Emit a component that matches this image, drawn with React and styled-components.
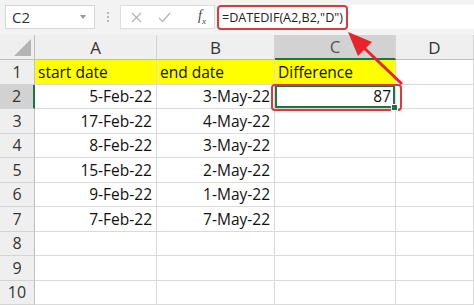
import React from "react";
import styled, { createGlobalStyle } from "styled-components";

const GlobalStyle = createGlobalStyle`
  html, body {
    margin: 0;
    padding: 0;
    background: #fff;
  }
  body {
    font-family: "Open Sans", "Liberation Sans", sans-serif;
  }
`;

const Sheet = styled.div`
  position: relative;
  width: 474px;
  height: 305px;
  overflow: hidden;
  background: #fff;
`;

const FormulaBar = styled.div`
  height: 35px;
  box-sizing: border-box;
  background: #f3f3f3;
  display: flex;
  align-items: flex-start;
  padding-top: 5px;
`;

const NameBox = styled.div`
  margin-left: 5px;
  width: 90px;
  height: 24px;
  box-sizing: border-box;
  background: #fff;
  border: 1px solid #d6d6d6;
  display: flex;
  align-items: center;
  justify-content: space-between;
  padding: 0 8px 0 6px;
  font-size: 15px;
  color: #333;
`;

const Caret = styled.span`
  width: 0;
  height: 0;
  border-left: 3.5px solid transparent;
  border-right: 3.5px solid transparent;
  border-top: 4px solid #999;
`;

const Dots = styled.div`
  width: 25px;
  height: 24px;
  display: flex;
  flex-direction: column;
  align-items: center;
  justify-content: center;
  gap: 2px;
  span {
    width: 2px;
    height: 2px;
    background: #b8b8b8;
  }
`;

const ButtonBox = styled.div`
  width: 95px;
  height: 24px;
  box-sizing: border-box;
  background: #fff;
  border: 1px solid #dedede;
  display: flex;
  align-items: center;
  padding: 0 8px 0 10px;
  gap: 16px;
`;

const FxIcon = styled.span`
  margin-left: auto;
  font-family: "Liberation Serif", "DejaVu Serif", serif;
  font-style: italic;
  font-size: 14px;
  color: #444;
  sub {
    font-size: 9px;
  }
`;

const FormulaInput = styled.div`
  flex: 1;
  margin-left: 2px;
  height: 24px;
  box-sizing: border-box;
  background: #fff;
  display: flex;
  align-items: center;
  padding-left: 5px;
  font-size: 12.6px;
  color: #222;
`;

const Grid = styled.div`
  display: grid;
  grid-template-columns: 35px 122px 118px 121px 1fr;
  grid-template-rows: 25px;
  grid-auto-rows: 24.5px;
`;

const Cell = styled.div`
  box-sizing: border-box;
  border-right: 1px solid #dadada;
  border-bottom: 1px solid #dadada;
  background: ${(p) => (p.$fill ? "#ffff00" : "#fff")};
  display: flex;
  align-items: center;
  justify-content: ${(p) => (p.$right ? "flex-end" : "flex-start")};
  padding: 0 4px 0 3px;
  font-size: 15.5px;
  color: #111;
  white-space: nowrap;
  position: relative;
  ${(p) => p.$active && "box-shadow: inset 0 0 0 2px #217346;"}
`;

const Handle = styled.span`
  position: absolute;
  right: -3px;
  bottom: -3px;
  width: 5px;
  height: 5px;
  background: #217346;
  border: 1px solid #fff;
  z-index: 2;
`;

const ColHead = styled.div`
  box-sizing: border-box;
  background: ${(p) => (p.$sel ? "#d2d2d2" : "#efefef")};
  border-right: 1px solid #d4d4d4;
  border-bottom: ${(p) => (p.$sel ? "2px solid #217346" : "1px solid #bfbfbf")};
  display: flex;
  align-items: center;
  justify-content: center;
  font-size: 17px;
  color: ${(p) => (p.$sel ? "#555" : "#333")};
`;

const RowHead = styled.div`
  box-sizing: border-box;
  background: ${(p) => (p.$sel ? "#d2d2d2" : "#efefef")};
  border-right: ${(p) => (p.$sel ? "2px solid #217346" : "1px solid #bfbfbf")};
  border-bottom: 1px solid #d4d4d4;
  display: flex;
  align-items: center;
  justify-content: center;
  font-size: 16px;
  color: #333;
`;

const Corner = styled.div`
  box-sizing: border-box;
  background: #efefef;
  border-right: 1px solid #bfbfbf;
  border-bottom: 1px solid #bfbfbf;
  display: flex;
  align-items: flex-end;
  justify-content: flex-end;
  padding: 0 3px 3px 0;
`;

const Highlight = styled.div`
  position: absolute;
  box-sizing: border-box;
  border: 2px solid #d93a40;
  border-radius: 4px;
  left: ${(p) => p.$x}px;
  top: ${(p) => p.$y}px;
  width: ${(p) => p.$w}px;
  height: ${(p) => p.$h}px;
  pointer-events: none;
`;

const Arrow = styled.svg`
  position: absolute;
  left: 0;
  top: 0;
  pointer-events: none;
`;

const rows = [
  ["5-Feb-22", "3-May-22"],
  ["17-Feb-22", "4-May-22"],
  ["8-Feb-22", "3-May-22"],
  ["15-Feb-22", "2-May-22"],
  ["9-Feb-22", "1-May-22"],
  ["7-Feb-22", "7-May-22"],
  ["", ""],
  ["", ""],
  ["", ""],
];

export default function App() {
  return (
    <Sheet>
      <GlobalStyle />
      <FormulaBar>
        <NameBox>
          C2
          <Caret />
        </NameBox>
        <Dots>
          <span />
          <span />
          <span />
        </Dots>
        <ButtonBox>
          <svg width="11" height="11" viewBox="0 0 11 11">
            <path d="M1 1L10 10M10 1L1 10" stroke="#b5b5b5" strokeWidth="1.3" />
          </svg>
          <svg width="13" height="11" viewBox="0 0 13 11">
            <path d="M1 6L4.5 9.5L12 1" stroke="#b5b5b5" strokeWidth="1.3" fill="none" />
          </svg>
          <FxIcon>
            f<sub>x</sub>
          </FxIcon>
        </ButtonBox>
        <FormulaInput>=DATEDIF(A2,B2,"D")</FormulaInput>
      </FormulaBar>

      <Grid>
        <Corner>
          <svg width="17" height="17" viewBox="0 0 17 17">
            <path d="M17 0L17 17L0 17Z" fill="#b4b4b4" />
          </svg>
        </Corner>
        <ColHead>A</ColHead>
        <ColHead>B</ColHead>
        <ColHead $sel>C</ColHead>
        <ColHead>D</ColHead>

        <RowHead>1</RowHead>
        <Cell $fill>start date</Cell>
        <Cell $fill>end date</Cell>
        <Cell $fill>Difference</Cell>
        <Cell />

        {rows.map((r, i) => (
          <React.Fragment key={i}>
            <RowHead $sel={i === 0}>{i + 2}</RowHead>
            <Cell $right>{r[0]}</Cell>
            <Cell $right>{r[1]}</Cell>
            {i === 0 ? (
              <Cell $right $active>
                87
                <Handle />
              </Cell>
            ) : (
              <Cell />
            )}
            <Cell />
          </React.Fragment>
        ))}
      </Grid>

      <Highlight $x={217} $y={5} $w={131} $h={25} />
      <Highlight $x={271} $y={84} $w={131} $h={27} />

      <Arrow width="474" height="305" viewBox="0 0 474 305">
        <line x1="402" y1="84" x2="360" y2="44" stroke="#e8232b" strokeWidth="3" />
        <path d="M348 32L372 42L358 56Z" fill="#e8232b" />
      </Arrow>
    </Sheet>
  );
}
